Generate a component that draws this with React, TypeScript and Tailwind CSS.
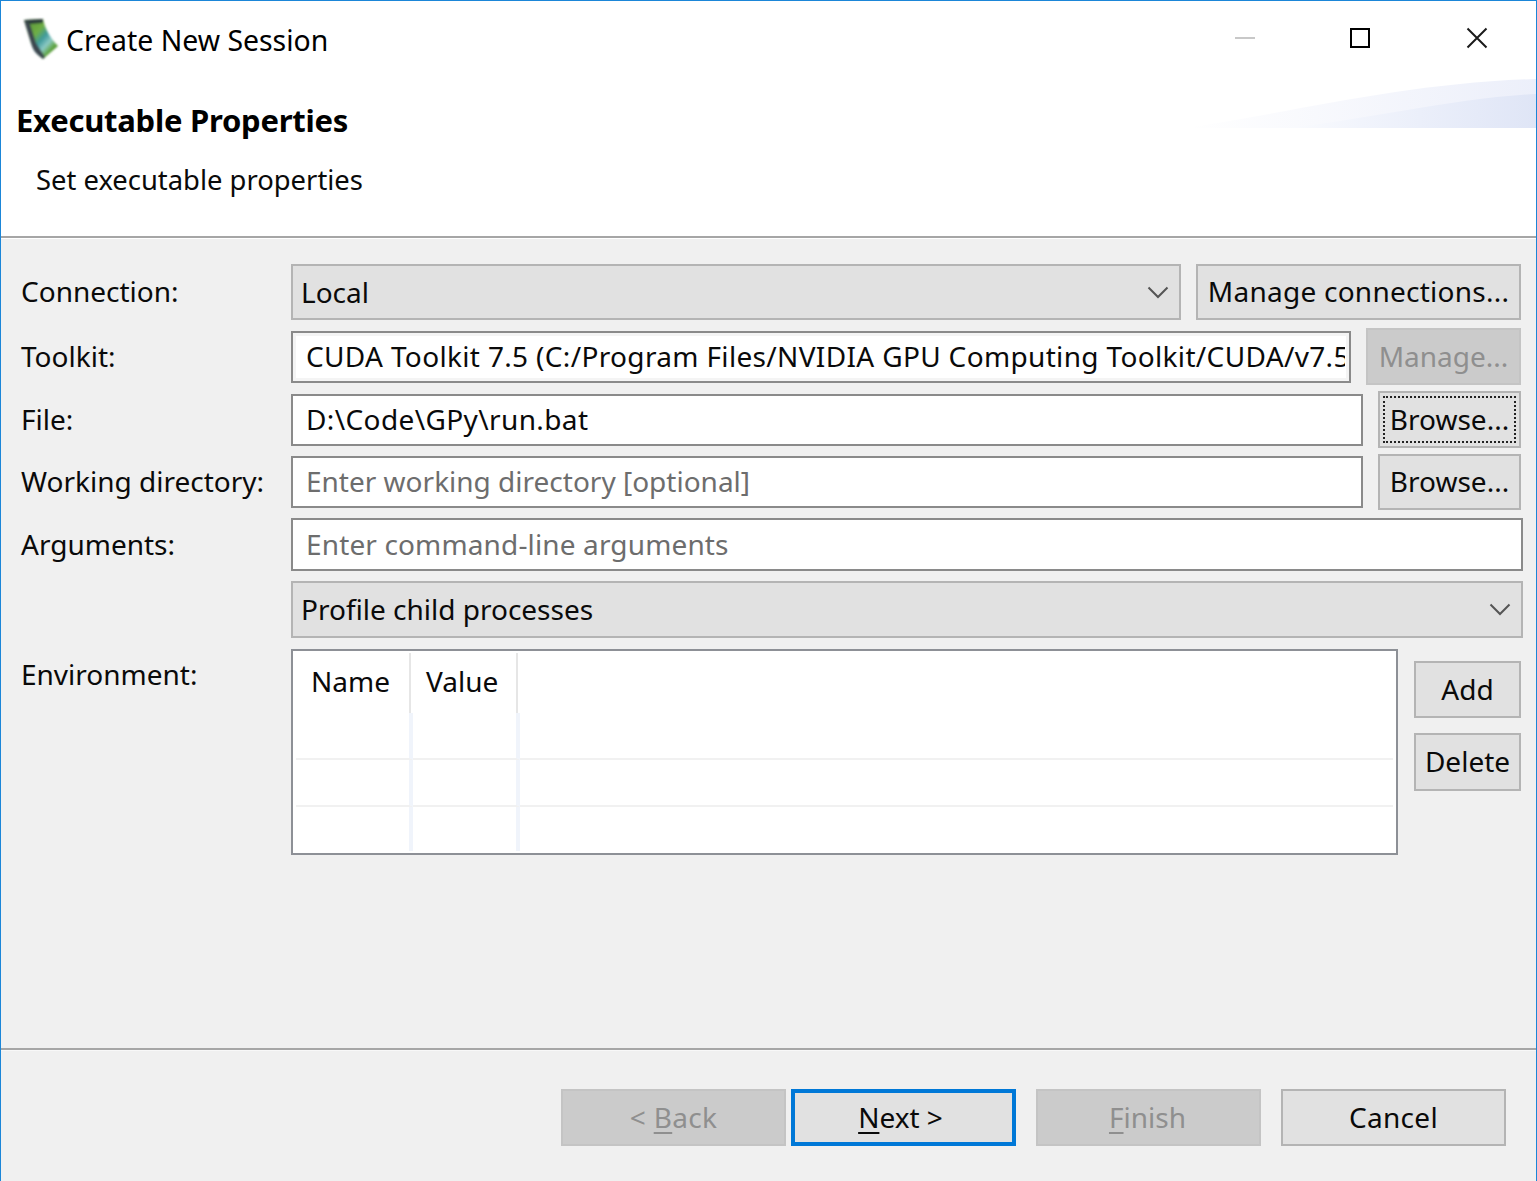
const FONT = "font-['Noto_Sans','Open_Sans',sans-serif]";

function Btn({ label, cls = "", disabled = false, focusDots = false }: { label: React.ReactNode; cls?: string; disabled?: boolean; focusDots?: boolean }) {
  return (
    <div
      className={`relative flex items-center justify-center border-2 text-[28px] leading-none ${
        disabled ? "border-[#c4c4c4] bg-[#cbcbcb] text-[#8f8f8f]" : "border-[#b4b4b4] bg-[#e1e1e1] text-[#0a0a0a]"
      } ${cls}`}
    >
      {focusDots && <div className="absolute inset-[3px] border-2 border-dotted border-[#222]" />}
      <span className="mb-[2px]">{label}</span>
    </div>
  );
}

function Input({ text, placeholder = false, cls = "", textCls = "" }: { text: string; placeholder?: boolean; cls?: string; textCls?: string }) {
  return (
    <div className={`flex h-[52px] items-center border-2 border-[#8a8a8a] bg-white pl-[13px] text-[28px] leading-none ${placeholder ? "text-[#6d6d6d]" : "text-[#0a0a0a]"} ${cls}`}>
      <div className={`mb-[2px] flex-1 overflow-hidden whitespace-nowrap py-[4px] ${textCls}`}>{text}</div>
    </div>
  );
}

function Select({ text, cls = "" }: { text: string; cls?: string }) {
  return (
    <div className={`flex items-center justify-between border-2 border-[#b4b4b4] bg-[#e1e1e1] pl-[8px] pr-[10px] text-[28px] leading-none text-[#0a0a0a] ${cls}`}>
      <span className="mb-[1px]">{text}</span>
      <svg width="22" height="13" viewBox="0 0 22 13" fill="none" stroke="#555" strokeWidth="2">
        <path d="M1.5 1.5 L11 11 L20.5 1.5" />
      </svg>
    </div>
  );
}

function Row({ label, cls, children }: { label?: string; cls: string; children: React.ReactNode }) {
  return (
    <div className={`flex items-center pl-[20px] ${cls}`}>
      <div className="mb-[2px] w-[270px] shrink-0 text-[28px] leading-none text-[#0a0a0a]">{label}</div>
      {children}
    </div>
  );
}

function TableRow({ cls, line = true }: { cls: string; line?: boolean }) {
  const b = line ? "border-b-2 border-[#f1f1f1]" : "";
  return (
    <div className={`flex ${cls}`}>
      <div className={`w-[117px] border-r-4 border-r-[#f0f4fb] ${b}`} />
      <div className={`w-[107px] border-r-4 border-r-[#f0f4fb] ${b}`} />
      <div className={`flex-1 ${b}`} />
    </div>
  );
}

export default function App() {
  return (
    <div className={`flex h-[1181px] w-[1537px] flex-col overflow-hidden border-x border-t border-x-[#1b86d8] border-t-[#1b86d8] bg-[#f0f0f0] ${FONT}`}>
      <header className="relative h-[235px] shrink-0 bg-white">
        <svg className="absolute right-0 top-[77px]" width="350" height="51" viewBox="0 0 350 51">
          <defs>
            <linearGradient id="w1" gradientUnits="userSpaceOnUse" x1="60" x2="350" y1="0" y2="0">
              <stop offset="0" stopColor="#ffffff" />
              <stop offset="0.4" stopColor="#f1f4fc" />
              <stop offset="1" stopColor="#dfe5f6" />
            </linearGradient>
            <linearGradient id="w2" gradientUnits="userSpaceOnUse" x1="0" x2="350" y1="0" y2="0">
              <stop offset="0" stopColor="#ffffff" />
              <stop offset="1" stopColor="#eceffa" />
            </linearGradient>
          </defs>
          <path d="M0 50 C120 32 220 5 350 1 L350 50 Z" fill="url(#w2)" />
          <path d="M100 50 C180 42 270 20 350 16 L350 50 Z" fill="url(#w1)" />
        </svg>

        <div className="flex h-[77px] items-center pl-[21px]">
          <svg width="38" height="44" viewBox="0 0 38 44" className="mt-[-1px]">
            <defs>
              <linearGradient id="ic" x1="0.1" y1="0.15" x2="0.85" y2="0.95">
                <stop offset="0" stopColor="#5f9a3a" />
                <stop offset="0.3" stopColor="#6fae45" />
                <stop offset="0.5" stopColor="#3f9a9c" />
                <stop offset="0.68" stopColor="#8cc9c4" />
                <stop offset="0.85" stopColor="#5ea33b" />
                <stop offset="1" stopColor="#3e7a35" />
              </linearGradient>
              <filter id="soft" x="-10%" y="-10%" width="120%" height="120%">
                <feGaussianBlur stdDeviation="0.8" />
              </filter>
            </defs>
            <g filter="url(#soft)">
              <path d="M2 3 L21 2 C23 12 29 22 36 29 L21 42 C16 38 12 36 9 26 Z" fill="url(#ic)" />
              <path d="M2 3 L21 2 L21 6 L8 7 Z" fill="#2b3a3a" />
              <path d="M2 3 L8 7 L14 26 L23 40 L21 42 C16 38 12 36 9 26 Z" fill="#3c4650" />
            </g>
          </svg>
          <span className="ml-[6px] mt-[2px] text-[28.4px] leading-none text-black">Create New Session</span>
          <div className="ml-auto mt-[-4px] flex h-[40px] items-center pr-[48px]">
            <div className="h-[2px] w-[20px] bg-[#c8c8c8]" />
            <div className="ml-[95px] h-[20px] w-[20px] border-2 border-black" />
            <svg className="ml-[96px]" width="22" height="22" viewBox="0 0 22 22" stroke="#1a1a1a" strokeWidth="2" fill="none">
              <path d="M1.5 1.5 L20.5 20.5 M20.5 1.5 L1.5 20.5" />
            </svg>
          </div>
        </div>
        <h1 className="ml-[15px] mt-[22px] text-[31px] font-bold leading-[40px] tracking-[-0.25px] text-black">Executable Properties</h1>
        <p className="ml-[35px] mt-[20px] text-[27.4px] leading-[40px] text-[#0a0a0a]">Set executable properties</p>
      </header>

      <div className="h-[3px] shrink-0 border-t-2 border-[#a6a6a6] bg-white" />

      <main className="flex-1">
        <Row label="Connection:" cls="mt-[25px] h-[56px]">
          <Select text="Local" cls="h-[56px] w-[890px]" />
          <Btn label={<span className="tracking-[0.25px]">Manage connections...</span>} cls="ml-[15px] h-[56px] w-[325px]" />
        </Row>
        <Row label="Toolkit:" cls="mt-[8px] h-[57px]">
          <Input text="CUDA Toolkit 7.5 (C:/Program Files/NVIDIA GPU Computing Toolkit/CUDA/v7.5)" textCls="tracking-[0.34px]" cls="w-[1060px] pr-[4px] shadow-[inset_0_0_0_3px_#f4f4f4]" />
          <Btn label="Manage..." disabled cls="ml-[15px] h-[57px] w-[155px]" />
        </Row>
        <Row label="File:" cls="mt-[6px] h-[57px]">
          <Input text="D:\Code\GPy\run.bat" textCls="tracking-[0.38px]" cls="w-[1072px]" />
          <Btn label="Browse..." focusDots cls="ml-[15px] h-[57px] w-[143px]" />
        </Row>
        <Row label="Working directory:" cls="mt-[6px] h-[56px]">
          <Input text="Enter working directory [optional]" placeholder cls="w-[1072px]" />
          <Btn label="Browse..." cls="ml-[15px] h-[56px] w-[143px]" />
        </Row>
        <Row label="Arguments:" cls="mt-[8px] h-[53px]">
          <Input text="Enter command-line arguments" placeholder textCls="tracking-[0.14px]" cls="h-[53px] w-[1232px]" />
        </Row>
        <Row cls="mt-[10px] h-[57px]">
          <Select text="Profile child processes" cls="h-[57px] w-[1232px]" />
        </Row>
        <div className="mt-[11px] flex h-[206px] pl-[20px]">
          <div className="w-[270px] shrink-0 pt-[10px] text-[28px] leading-[30px] text-[#0a0a0a]">Environment:</div>
          <div className="flex h-[206px] w-[1107px] flex-col border-2 border-[#8d9096] bg-white px-[3px] pt-[2px]">
            <div className="flex h-[60px] text-[28px] leading-none text-[#0a0a0a]">
              <div className="flex w-[115px] items-start border-r-2 border-[#e6e6e6] pl-[15px] pt-[14px]">Name</div>
              <div className="flex w-[107px] items-start border-r-2 border-[#e6e6e6] pl-[15px] pt-[14px]">Value</div>
            </div>
            <TableRow cls="h-[47px]" />
            <TableRow cls="h-[47px]" />
            <TableRow cls="h-[44px]" line={false} />
          </div>
          <div className="ml-[16px] flex flex-col">
            <Btn label="Add" cls="mt-[12px] h-[57px] w-[107px]" />
            <Btn label="Delete" cls="mt-[15px] h-[58px] w-[107px]" />
          </div>
        </div>
      </main>

      <div className="h-[3px] shrink-0 border-t-2 border-[#a6a6a6] bg-[#f8f8f8]" />

      <footer className="flex h-[130px] shrink-0 items-start pl-[560px] pt-[38px]">
        <Btn disabled cls="h-[57px] w-[225px]" label={<span className="tracking-[0.3px]">&lt; <span className="underline underline-offset-4">B</span>ack</span>} />
        <Btn cls="ml-[5px] h-[57px] w-[225px] !border-4 !border-[#0078d7] pr-[6px]" label={<><span className="underline underline-offset-4">N</span>ext &gt;</>} />
        <Btn disabled cls="ml-[20px] h-[57px] w-[225px] pr-[2px]" label={<><span className="underline underline-offset-4">F</span>inish</>} />
        <Btn cls="ml-[20px] h-[57px] w-[225px]" label={<span className="tracking-[0.3px]">Cancel</span>} />
      </footer>
    </div>
  );
}
